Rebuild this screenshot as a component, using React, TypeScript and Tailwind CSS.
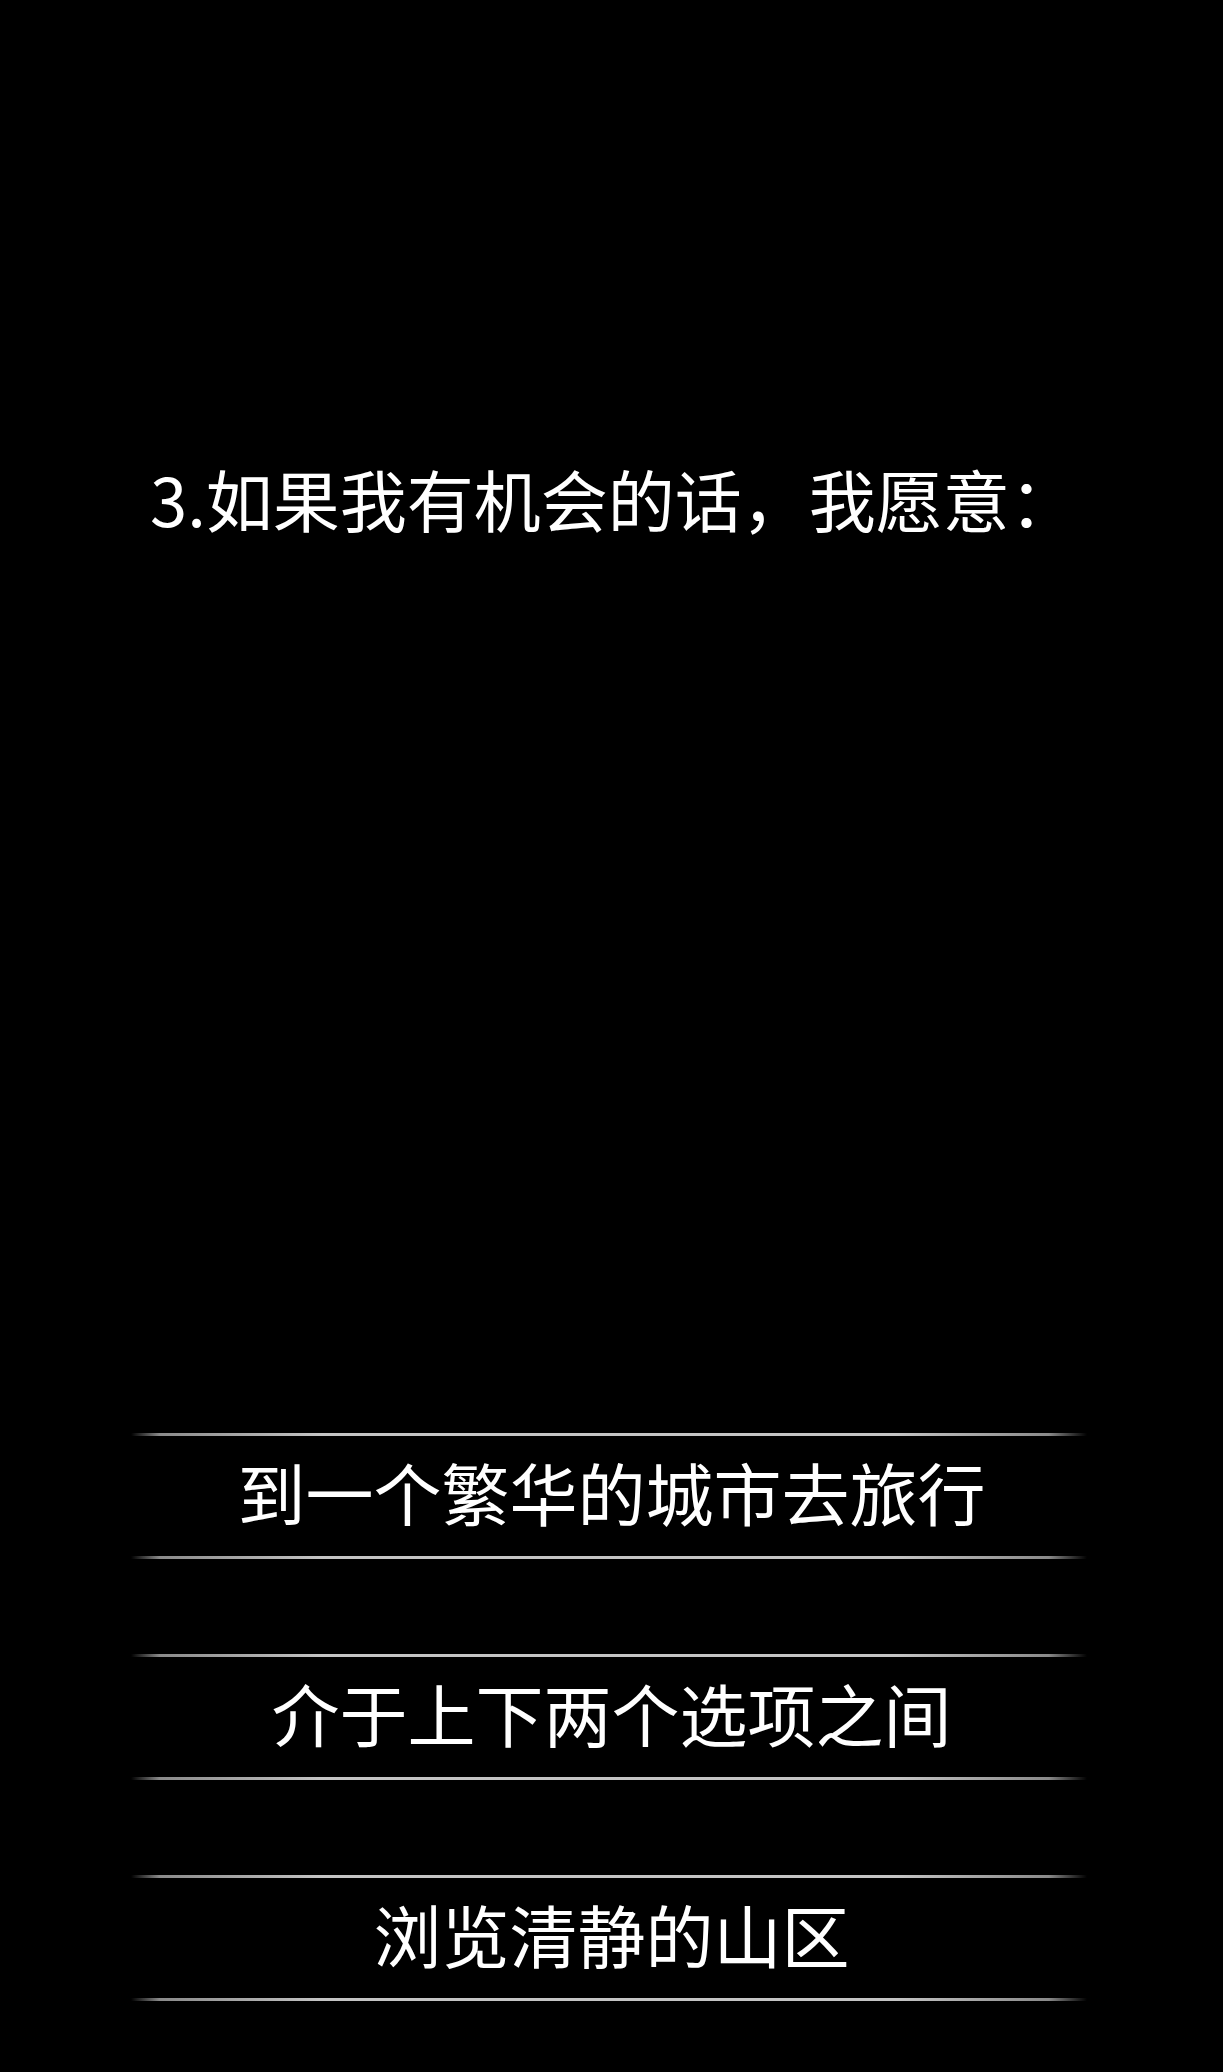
import React from "react";

const options = ["到一个繁华的城市去旅行", "介于上下两个选项之间", "浏览清静的山区"];

function Line() {
  return (
    <div className="ml-[131px] h-[3px] w-[956px] bg-[linear-gradient(to_right,rgba(0,0,0,0),#8a8a8a_3%,#c4c4c4_20%,#c4c4c4_80%,#8a8a8a_96%,rgba(0,0,0,0))]" />
  );
}

export default function App() {
  return (
    <div
      className="h-[2072px] w-full overflow-hidden bg-black text-white"
      style={{ fontFamily: '"Noto Sans CJK SC", "Noto Sans", sans-serif' }}
    >
      <div className="pl-[150px] pt-[464px] text-[67px] leading-[67px] whitespace-nowrap">
        3.如果我有机会的话，我愿意：
      </div>
      <div className="mt-[902px] flex flex-col gap-[95px]">
        {options.map((o) => (
          <div key={o} className="flex flex-col">
            <Line />
            <div className="h-[120px] text-center text-[68px] leading-[111px] whitespace-nowrap">
              {o}
            </div>
            <Line />
          </div>
        ))}
      </div>
    </div>
  );
}
